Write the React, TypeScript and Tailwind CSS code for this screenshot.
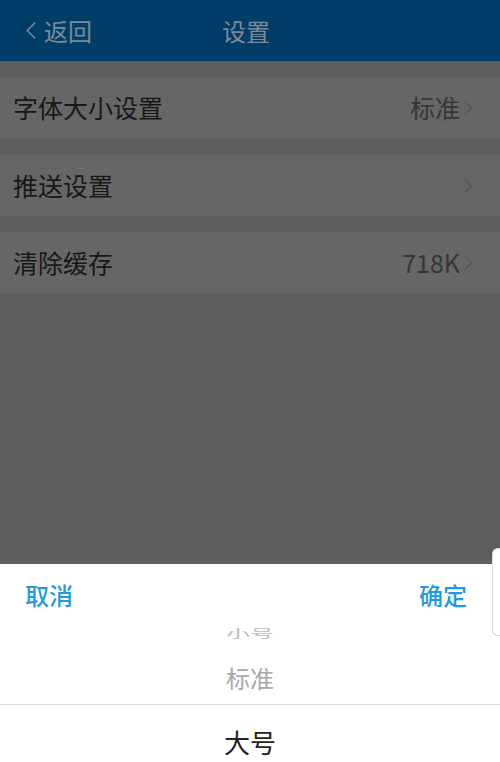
import React from "react"

const font = { fontFamily: '"Noto Sans CJK SC", "Noto Sans", sans-serif' }

function Chevron({ className }: { className?: string }) {
  return (
    <svg viewBox="0 0 10 16" className={className} fill="none" stroke="currentColor" strokeWidth={1.4}>
      <path d="M2 1.5 L8.5 8 L2 14.5" />
    </svg>
  )
}

function Row({ label, value }: { label: string; value?: string }) {
  return (
    <div className="h-[61px] bg-[#666666] flex items-center pl-[13px] pr-[27px]">
      <span className="text-[25px] text-[#181818] leading-none">{label}</span>
      <span className="ml-auto text-[25px] text-[#363636] leading-none">{value}</span>
      <Chevron className="ml-[3px] w-[10px] h-[16px] text-[#555555]" />
    </div>
  )
}

export default function App() {
  return (
    <div style={font} className="relative w-[500px] h-[762px] overflow-hidden bg-[#5e5e5e] flex flex-col">
      <header className="h-[61px] shrink-0 bg-[#013d69] flex items-center">
        <div className="w-[222px] flex items-center pl-[25px] text-[#7d8a96]">
          <svg viewBox="0 0 12 20" className="w-[12px] h-[19px]" fill="none" stroke="currentColor" strokeWidth={1.6}>
            <path d="M10.5 1.5 L2 10 L10.5 18.5" />
          </svg>
          <span className="ml-[7px] text-[24px] leading-none">返回</span>
        </div>
        <span className="text-[24px] leading-none text-[#7d8a96]">设置</span>
      </header>

      <div className="mt-[16px]">
        <Row label="字体大小设置" value="标准" />
      </div>
      <div className="mt-[17px]">
        <Row label="推送设置" />
      </div>
      <div className="mt-[16px]">
        <Row label="清除缓存" value="718K" />
      </div>

      <div className="flex-1" />

      <div className="h-[198px] shrink-0 bg-white flex flex-col">
        <div className="h-[62px] flex items-center justify-between px-[25px] text-[24px] font-medium leading-none text-[#1e9ae0]">
          <span>取消</span>
          <span className="mr-[8px]">确定</span>
        </div>
        <div className="h-[22px] overflow-hidden flex justify-center">
          <span className="block text-[24px] leading-none text-[#bbbbbb] scale-y-[0.45] origin-top -mt-[6px] translate-y-[8px]">小号</span>
        </div>
        <div className="h-[56px] flex justify-center items-start pt-[18px] text-[24px] leading-none text-[#a8a8a8]">
          标准
        </div>
        <div className="flex-1 border-t border-[#dddddd] flex justify-center items-start pt-[24px] text-[26px] leading-none text-[#222222]">
          大号
        </div>
      </div>

      <div className="absolute right-0 top-[548px] w-[8px] h-[88px] rounded-l-[6px] border border-r-0 border-[#dcdcdc] bg-white" />
    </div>
  )
}
